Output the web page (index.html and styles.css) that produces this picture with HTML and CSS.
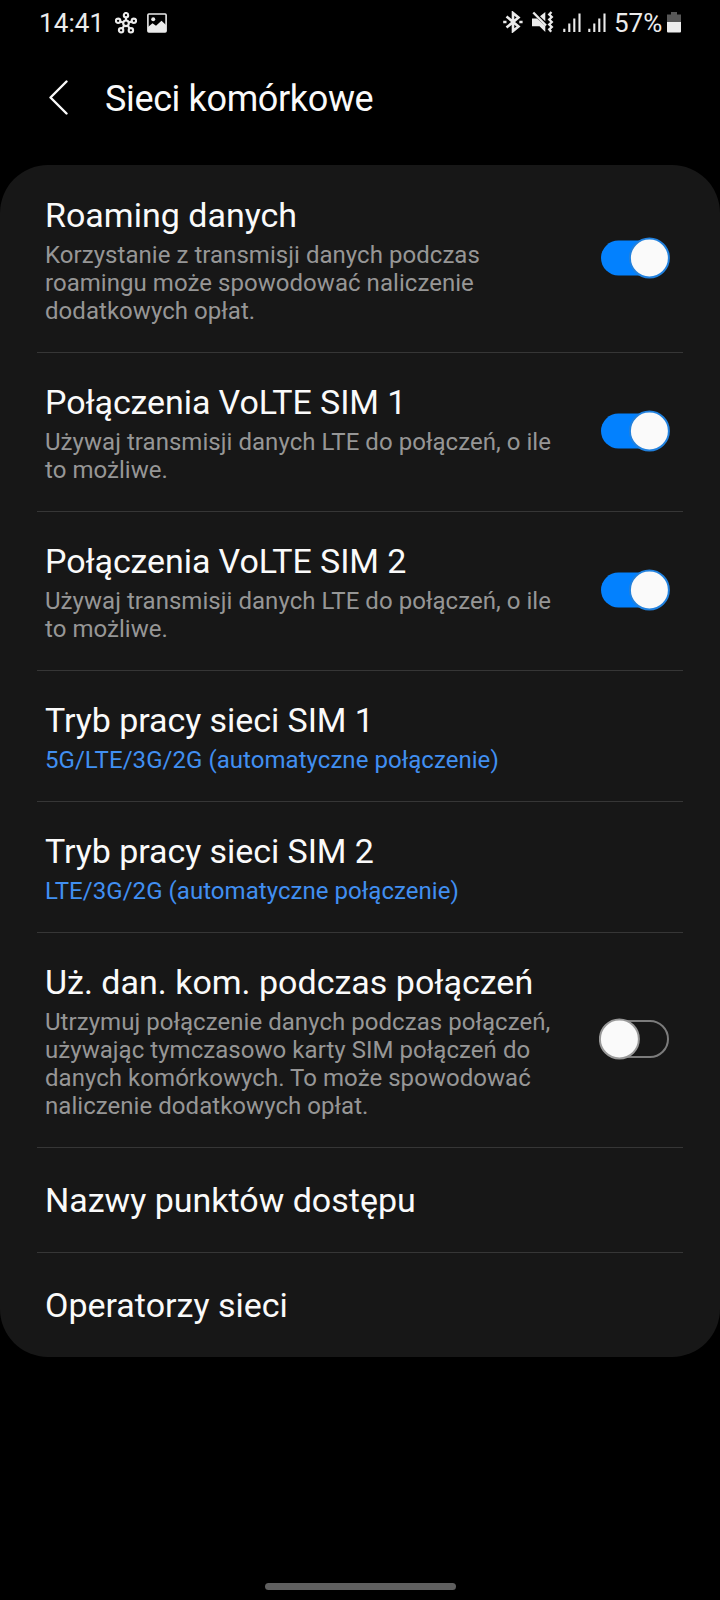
FILE: index.html
```html
<!DOCTYPE html>
<html lang="pl">
<head>
<meta charset="utf-8">
<title>Sieci komórkowe</title>
<link rel="stylesheet" href="styles.css">
</head>
<body>
<svg width="0" height="0" class="defs">
  <symbol id="switch-on" viewBox="0 0 72 42">
    <rect x="2" y="3.5" width="68" height="35" rx="17.5" fill="#0381fe"/>
    <circle cx="50.4" cy="21" r="19.5" fill="#fafafa" stroke="#2181de" stroke-width="2"/>
  </symbol>
  <symbol id="switch-off" viewBox="0 0 72 42">
    <rect x="2" y="3" width="67" height="36" rx="18" fill="none" stroke="#7c7c7c" stroke-width="2"/>
    <circle cx="20.4" cy="21" r="19.5" fill="#fafafa" stroke="#999" stroke-width="2"/>
  </symbol>
  <symbol id="signal" viewBox="0 0 18 20">
    <path d="M1.300 15.800v3.200M6.300 10.500v8.500M11.300 5.500v13.500M16.500 0.500v18.500" stroke="#ebebeb" stroke-width="2.100"/>
  </symbol>
</svg>
<header class="status">
  <div class="status-left">
    <span class="clock">14:41</span>
    <svg class="ic-hub" width="22" height="22" viewBox="0 0 22 22" fill="none" stroke="#ebebeb" stroke-width="2.100">
      <circle cx="11" cy="11.300" r="2.800"/><circle cx="11" cy="3.200" r="2.200"/><circle cx="3.100" cy="8.800" r="2.200"/><circle cx="18.900" cy="8.800" r="2.200"/><circle cx="6.100" cy="18.300" r="2.200"/><circle cx="15.900" cy="18.300" r="2.200"/>
      <path d="M11 5.300v3.200M5.200 9.600l3 .9M16.800 9.600l-3 .9M7.500 16.200l1.800-2.500M14.500 16.200l-1.800-2.500"/>
    </svg>
    <svg class="ic-image" width="20" height="20" viewBox="0 0 20 20">
      <rect x=".9" y="1" width="18.200" height="18" rx="1" fill="none" stroke="#ebebeb" stroke-width="1.600"/>
      <circle cx="6.200" cy="6.300" r="2" fill="#ebebeb"/>
      <path d="M1 14l4.500-3.700 3.500 2.500 5.500-5L19 12v7H1z" fill="#ebebeb"/>
    </svg>
  </div>
  <div class="status-right">
    <svg class="ic-bluetooth" width="20" height="22" viewBox="0 0 20 22" fill="none" stroke="#ebebeb" stroke-width="2.600">
      <path d="M3.500 5.500l12 10L10 20V2l5.500 4.500-12 10"/>
      <path d="M.2 11h3.300M16.300 11h3.300"/>
    </svg>
    <svg class="ic-mute" width="22" height="22" viewBox="0 0 22 22">
      <path d="M0 7.500h5L13.300 15v6L7.500 15.300H0zM8 5.300L13.300 1v9.300z" fill="#ebebeb"/>
      <path d="M1.300 1.500L14 14.500" stroke="#ebebeb" stroke-width="2.400"/>
      <path d="M19.500 1l-2.300 2.500 2.600 2.500-2.600 2.500 2.600 2.500-2.600 2.500 2.600 2.500-2.600 2.300 2 2.400" fill="none" stroke="#ebebeb" stroke-width="2.300"/>
    </svg>
    <svg class="ic-signal" width="18" height="20"><use href="#signal"/></svg>
    <svg class="ic-signal second" width="18" height="20"><use href="#signal"/></svg>
    <span class="percent">57%</span>
    <svg class="ic-battery" width="14" height="21" viewBox="0 0 14 21">
      <path d="M4 0h6v2.500h4v8H0v-8h4z" fill="#575757"/>
      <path d="M0 10h14v9.500q0 1-1 1H1q-1 0-1-1z" fill="#ededed"/>
    </svg>
  </div>
</header>
<div class="toolbar">
  <svg class="back" width="20" height="36" viewBox="0 0 20 36" fill="none" stroke="#fafafa" stroke-width="2.400" stroke-linecap="round" stroke-linejoin="round"><path d="M17.500 1.500L1.500 17.500l16 16"/></svg>
  <h1>Sieci komórkowe</h1>
</div>
<main class="card">
  <section class="row first">
    <div class="text"><h2>Roaming danych</h2><p>Korzystanie z transmisji danych podczas<br>roamingu może spowodować naliczenie<br>dodatkowych opłat.</p></div>
    <svg class="switch"><use href="#switch-on"/></svg>
  </section>
  <section class="row">
    <div class="text"><h2 class="sim">Połączenia VoLTE SIM 1</h2><p>Używaj transmisji danych LTE do połączeń, o ile<br>to możliwe.</p></div>
    <svg class="switch"><use href="#switch-on"/></svg>
  </section>
  <section class="row">
    <div class="text"><h2 class="sim">Połączenia VoLTE SIM 2</h2><p>Używaj transmisji danych LTE do połączeń, o ile<br>to możliwe.</p></div>
    <svg class="switch"><use href="#switch-on"/></svg>
  </section>
  <section class="row">
    <div class="text"><h2 class="mode">Tryb pracy sieci SIM 1</h2><p class="value">5G/LTE/3G/2G (automatyczne połączenie)</p></div>
  </section>
  <section class="row">
    <div class="text"><h2 class="mode">Tryb pracy sieci SIM 2</h2><p class="value">LTE/3G/2G (automatyczne połączenie)</p></div>
  </section>
  <section class="row">
    <div class="text"><h2>Uż. dan. kom. podczas połączeń</h2><p>Utrzymuj połączenie danych podczas połączeń,<br>używając tymczasowo karty SIM połączeń do<br>danych komórkowych. To może spowodować<br>naliczenie dodatkowych opłat.</p></div>
    <svg class="switch"><use href="#switch-off"/></svg>
  </section>
  <section class="row single"><h2>Nazwy punktów dostępu</h2></section>
  <section class="row single last"><h2>Operatorzy sieci</h2></section>
</main>
<div class="home-bar"></div>
</body>
</html>
```
FILE: styles.css
```css
* { box-sizing: border-box; }
body {
  margin: 0;
  height: 1600px;
  display: flex;
  flex-direction: column;
  background: #000;
  color: #fafafa;
  font-family: Roboto, sans-serif;
  overflow: hidden;
}
.defs { display: none; }
svg { flex: none; }
h1, h2, p { margin: 0; font-weight: 400; white-space: nowrap; }
.status {
  height: 46px;
  padding: 0 39px;
  display: flex;
  justify-content: space-between;
  color: #ebebeb;
  font-size: 26px;
  line-height: 46px;
}
.status-left, .status-right { display: flex; align-items: center; }
.clock { width: 76px; letter-spacing: 0.1px; }
.ic-hub { margin-top: -1px; }
.ic-image { margin: -1px 0 0 10px; }
.ic-bluetooth { margin-top: -2px; }
.ic-mute { margin: -2px 0 0 9px; }
.ic-signal { margin: 0 0 0 9px; }
.ic-signal.second { margin-left: 7px; }
.percent { margin-left: 8px; width: 51px; }
.ic-battery { margin: -2px 0 0 2px; }
.toolbar {
  height: 119px;
  padding: 34px 49px 0;
  display: flex;
  align-items: flex-start;
}
.back { margin-right: 36px; }
h1 { font-size: 36px; line-height: 38px; letter-spacing: -0.36px; }
.card { background: #171717; border-radius: 48px; }
.row {
  padding: 29px 0 27px;
  margin: 0 37px;
  border-bottom: 1px solid #363636;
  display: flex;
  align-items: center;
  justify-content: space-between;
}
.row.first { padding-top: 30px; }
.row.single { padding: 32px 0; }
.row.last { border-bottom: 0; }
.text, .single h2 { margin-left: 8px; }
h2 { font-size: 34px; line-height: 40px; }
h2.sim { letter-spacing: -0.1px; }
h2.mode { letter-spacing: -0.06px; }
p { margin-top: 6px; font-size: 24px; line-height: 28px; letter-spacing: 0.045px; color: #969696; }
.value { color: #418ff1; }
.switch { width: 72px; height: 42px; margin: 0 12px 5px 0; }
.home-bar {
  width: 191px;
  height: 7px;
  margin: auto auto 10px;
  border-radius: 4px;
  background: #5f5f5f;
}
```
